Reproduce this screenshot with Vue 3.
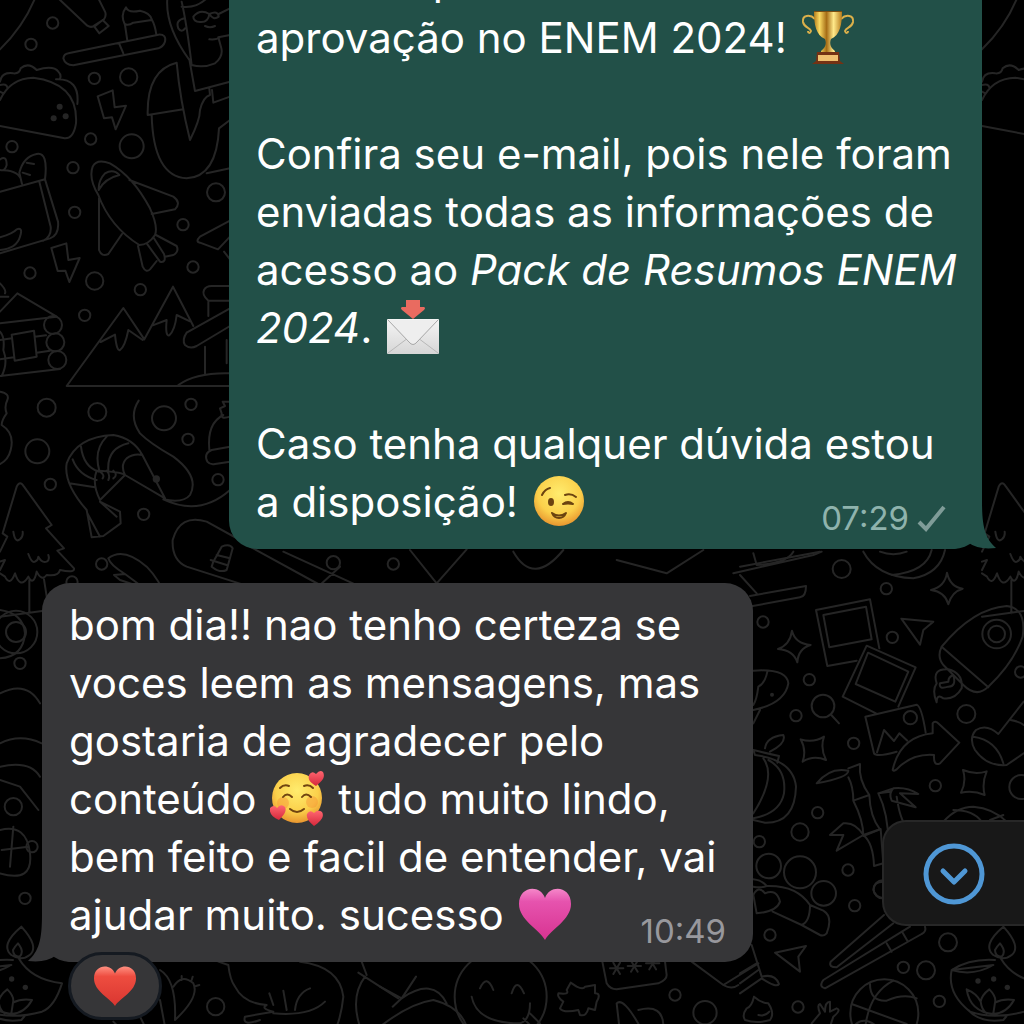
<script setup>
const dots = [
  [158, 69, 17], [93, 133, 17], [283, 235, 17], [386, 231, 26], [36, 440, 17], [272, 417, 17],
  [395, 439, 36], [219, 503, 17], [224, 637, 17], [648, 577, 27], [549, 674, 17], [579, 801, 17],
  [90, 819, 17], [284, 843, 26], [421, 869, 17], [254, 946, 17], [140, 1223, 27], [292, 1236, 27],
  [492, 1255, 36], [573, 1213, 17], [564, 1318, 17], [112, 1354, 36], [151, 1453, 17], [654, 1439, 17],
  [431, 1543, 17], [216, 1746, 17], [305, 1692, 17], [1000, 1688, 20], [1180, 1692, 17],
  [2525, 1707, 27], [2659, 1766, 17], [2289, 1866, 17], [2677, 1912, 17], [2428, 2039, 17],
  [2388, 2147, 17], [2561, 2230, 17], [2899, 2142, 27], [2806, 2357, 17], [2453, 2438, 17],
  [3064, 2361, 36], [3062, 2016, 17], [2400, 2496, 26], [2278, 2525, 17], [2544, 2610, 17],
  [2564, 2717, 17], [2310, 2805, 17], [2844, 2827, 27], [2710, 2902, 17], [2778, 2911, 27],
  [2394, 3021, 17], [2818, 3004, 17], [2648, 2668, 27], [75, 2695, 17], [647, 3020, 26],
  [2025, 2985, 17], [2115, 3038, 35], [60, 1990, 17], [40, 2420, 26], [96, 2540, 17],
]
</script>

<template>
  <main class="chat">
    <svg class="wallpaper" viewBox="0 0 3072 3072" preserveAspectRatio="xMidYMin slice" aria-hidden="true">
      <circle v-for="(d, i) in dots" :key="i" :cx="d[0]" :cy="d[1]" :r="d[2]" />
      <!-- toothbrush, taco, lightning, bread bag, plane -->
      <g id="edge">
        <path d="M105-5Q70 80 0 148M175-5L262 77Q275 85 285 75L312 58Q320 45 315 35L295-5M283 80L308 60 326 78 298 100Z" />
        <path d="M0 245Q5 215 40 220Q58 222 62 205Q85 185 110 210Q160 195 175 215Q185 225 180 236M0 300Q30 235 100 233Q235 250 228 370Q220 420 190 414L0 378M168 238Q240 235 232 312M0 255Q20 250 22 262M0 275 10 280" />
        <circle class="fill" cx="179" cy="320" r="9" /><circle class="fill" cx="161" cy="355" r="9" /><circle class="fill" cx="197" cy="349" r="9" />
      </g>
      <path d="M205 160 475 104Q500 102 495 125Q490 140 475 145L220 196Q195 195 190 175Q192 162 205 160ZM358 132 370 160M382 122L375 75Q360 45 378 22Q385 40 420 32Q450 38 455 58Q465 75 469 104M374 72Q385 78 400 68L455 60" />
      <path d="M293 289 338 271 344 322 378 317 347 388 336 352 312 355ZM154 744 199 730 205 780 239 774 208 846 196 812 173 813Z" />
      <path d="M0 575 135 538Q145 455 110 462Q70 470 58 518L66 552M0 510Q50 510 62 535M80 488 102 492M68 518 90 525M0 478Q20 465 20 495Q15 515 0 510M118 545 152 680Q155 710 130 722M135 538L174 665Q178 705 150 715L0 760M0 712Q40 700 50 688Q70 680 60 710Q50 745 0 750" />
      <path d="M278 500Q290 475 330 490Q400 530 450 625Q475 680 465 705Q445 735 418 735Q330 680 295 585Q265 535 278 500ZM296 570Q295 540 315 520Q340 505 358 525Q315 535 296 570ZM388 540 520 590Q545 608 525 628L455 642M297 595V750Q305 772 325 762L366 702M414 738L428 800Q438 820 450 808L470 783M468 705 530 738Q538 755 520 765L495 770M440 730 480 785Q500 790 492 762L460 712" />
      <path d="M502-5Q495 80 568 180M545 5Q560 70 575 195Q610 205 645 190Q670 170 664 145L655 112 690 105M545 20Q590 25 620-5M580 50Q600 25 628 42Q625 68 600 66Q580 65 580 50ZM628 42Q655 30 656 50 640 62 628 42M656 42 690 25M555 55Q525 60 535 85Q545 100 555 85M615 78Q630 85 645 78M628 118Q650 120 660 112M530 188Q440 210 443 345L550 328M568 178 585 273 690 245M530 188Q540 300 570 420Q600 360 600 330Q610 290 630 285L628 265M636 270 640 308 690 290M455 345Q460 530 560 535Q650 530 657 385L690 360M620 520 690 505" />
      <path d="M690 662 600 710Q585 725 600 728L654 748 690 710M672 755 690 778" />
      <!-- cabin, mountains, house -->
      <path d="M0 970 170 950 52 880 0 935M0 890 25 890M0 850Q20 870 15 880M0 1128 180 1107M35 1004 102 992 110 1070 44 1082ZM0 1020 36 1015M0 1078 42 1072M104 1010 138 1006M110 1058 150 1052M0 995Q15 1010 10 1050Q25 1090 5 1128" />
      <circle cx="159" cy="975" r="27" /><circle cx="166" cy="1027" r="27" /><circle cx="172" cy="1080" r="27" />
      <path d="M700 1158H200L370 924 433 1018 519 860 580 978M302 1026 345 1004Q350 1055 360 1050Q375 1040 385 990L428 1020M458 976 500 960Q495 1010 508 1006Q525 990 530 945L570 964M625 948V902Q605 885 612 870Q618 858 635 858H700M625 902H700M615 1120V1040M560 998 690 925M560 998Q545 1020 555 1035Q570 1048 590 1038L690 978M535 1155Q590 1115 700 1120M680 1020V1090" />
      <!-- tree -->
      <path d="M0 1175Q30 1180 22 1200Q12 1220 20 1240Q5 1260 5 1275Q45 1300 32 1350Q25 1380 0 1392" />
      <g id="tree">
        <path d="M50 1460Q60 1440 72 1460L155 1575 138 1585 192 1645 172 1652 222 1705Q225 1720 180 1710Q175 1730 140 1725Q125 1745 110 1715Q100 1760 85 1730Q60 1770 45 1720Q30 1760 15 1730L0 1720M50 1460 8 1600 22 1610 0 1655M0 1685 15 1680 0 1710M40 1595Q45 1630 60 1618Q70 1610 68 1595M85 1662Q95 1690 105 1685Q115 1680 115 1670Q125 1690 140 1685Q150 1680 145 1665M88 1740V1840M132 1738 148 1840M0 1850 148 1830" />
      </g>
      <use href="#edge" x="2946" /><use href="#tree" x="2946" />
      <!-- prawn -->
      <path d="M260 1530Q190 1450 200 1390Q230 1310 340 1305Q400 1315 427 1365L495 1495 375 1425Q360 1395 380 1375Q400 1360 427 1365M375 1425Q365 1415 290 1412Q275 1450 300 1500ZM208 1450 285 1462M218 1378Q235 1425 290 1440M243 1340Q250 1400 296 1415M320 1310Q280 1350 298 1412M385 1330Q320 1345 325 1412M300 1415Q315 1425 308 1435M320 1412Q332 1425 325 1440M340 1412Q355 1425 340 1435M260 1530 275 1612 310 1608 362 1570 360 1535 300 1505M262 1540 300 1610M300 1505 350 1550M416 1202Q385 1250 420 1300Q450 1330 520 1370Q600 1430 570 1485Q550 1510 490 1498Q600 1550 690 1470" />
      <circle class="fill" cx="469" cy="1437" r="11" />
      <path d="M690 1340 635 1350Q610 1360 622 1385Q630 1395 645 1392L690 1385M628 1350Q620 1270 670 1245M690 1250Q660 1260 665 1240L660 1225 675 1218 668 1205 690 1205" />
      <path d="M720 1620 620 1565Q540 1540 518 1620Q515 1680 560 1700L780 1770M640 1685 665 1640Q690 1630 698 1645L680 1710Q660 1720 635 1700ZM650 1665 690 1675M632 1680 680 1695" />
      <path d="M325 1675Q370 1640 440 1700Q480 1740 500 1800M325 1675Q330 1695 375 1722L342 1725 360 1740 420 1760M375 1722 480 1800" />
      <path d="M0 1830Q70 1840 75 1900Q70 1970 0 1975" /><circle cx="48" cy="1896" r="64" /><circle cx="48" cy="1896" r="30" />
      <path d="M0 2080Q80 2040 120 2110M0 2230Q60 2200 125 2230M0 2300Q90 2280 120 2330M0 2490Q80 2470 90 2560T0 2620M40 2480 30 2600M5 2550 85 2540M0 2340 60 2360 115 2430" />
      <path d="M750 1640 960 1755 1020 1700M850 1655 1080 1760M1230 1650 1310 1750 1400 1648M1540 1655Q1600 1760 1690 1650M1850 1680 2000 1720 2110 1650M2200 1720 2440 1665 2465 1655M2260 1660 2270 1695M2380 1655Q2360 1690 2270 1695" />
      <!-- photos and rocket -->
      <g transform="translate(2220 1620)">
        <path d="M0 80 240 35M0 105 50 160M30 168 198 138Q198 170 180 172L0 205M370 35Q410 110 520 115Q600 100 615 30M420 35Q460 50 500 35M455 105Q560 95 575 30" />
        <path d="M621 98Q630 140 668 146Q635 155 625 193Q615 155 573 150Q615 140 621 98ZM156 272Q165 310 212 315Q175 325 172 367Q160 330 114 327Q150 315 156 272ZM182 598Q220 610 252 590Q240 625 258 660Q220 645 188 665Q200 630 182 598ZM669 690Q705 705 740 694Q725 730 734 765Q700 750 663 758Q680 725 669 690Z" />
        <path d="M228 210 390 178 418 325M228 210 262 378 350 362M250 225 378 200 395 298 268 322ZM380 317 527 382 475 500M380 317 308 470 408 520M384 338 505 395 466 485 347 432ZM376 530 530 494Q545 500 557 578M376 530 402 640Q410 652 470 635M411 637 432 570 462 603 478 580 502 602M484 236 580 245 550 270 540 314Z" />
        <circle cx="511" cy="533" r="20" /><path d="M458 690Q480 590 578 580V550Q585 540 597 552L658 608 600 670Q580 680 582 645Q515 640 470 688Q460 695 458 690Z" />
        <path d="M605 320Q700 205 800 198Q860 205 848 290Q820 370 745 440Q710 475 670 435L610 375Q590 350 605 320L745 442M625 388Q575 385 590 430Q575 450 590 487Q590 460 610 475Q645 480 665 445Q670 400 625 388M600 430Q595 450 625 440Q650 440 640 405Q625 410 625 425Z" />
        <circle cx="770" cy="282" r="43" /><circle cx="770" cy="282" r="25" />
        <path d="M851 485 775 582Q740 550 708 570Q685 595 705 630Q740 680 800 675L851 640M700 590Q770 600 790 670M812 540Q840 545 851 555" />
        <circle cx="249" cy="498" r="34" /><path d="M274 525 297 550M40 392Q140 385 145 430Q135 490 40 510M82 395Q75 430 55 440Q50 480 40 495M40 550 60 510" /><circle class="fill" cx="96" cy="464" r="6" />
        <path d="M40 630Q80 640 117 648L112 668M40 630 45 645M75 625Q80 590 130 585Q140 610 90 635M45 645Q160 660 168 740Q165 850 75 848L40 840M85 660Q140 690 132 760Q120 820 40 835M70 655Q110 710 40 820" />
        <path d="M230 730Q270 680 325 692 325 712 230 730ZM325 685 360 672Q355 720 388 765L340 782Q340 740 325 712M388 765Q390 830 420 868L370 888Q370 840 340 782M450 755 415 760Q445 820 445 910M470 770Q480 840 500 860M415 760 460 745Q500 740 535 762L480 760 527 802 455 782Q445 760 460 745" />
        <path d="M270 885 310 850Q345 845 370 885L290 932 310 885ZM370 885 422 867 430 970 402 978Q400 910 370 885M610 845Q650 800 700 800Q760 805 800 845M640 810Q700 810 725 845M750 840 790 825" />
      </g>
      <!-- paw, chopsticks, ball -->
      <g transform="translate(2220 2340)">
        <circle cx="86" cy="258" r="37" /><circle cx="180" cy="277" r="48" /><circle cx="251" cy="340" r="37" /><path d="M430 305Q400 305 400 330Q405 350 430 355" />
        <path d="M40 298Q65 300 80 318Q170 315 210 375Q210 425 185 435L98 395M80 318Q60 325 40 320M50 400 40 345Q55 315 75 340Q110 325 120 365Q110 395 50 400ZM210 375 250 392Q280 410 260 460Q250 470 240 465L185 435" />
        <path d="M432 405 272 545Q265 562 290 562L460 430M555 440Q560 455 545 462L255 625Q235 620 250 600L510 440M440 490 455 515M488 458 502 482M105 518 198 498 175 530 180 575Z" />
        <path d="M35 495 65 590Q105 580 117 612Q110 625 65 595L0 640M0 580 50 550M0 610 55 570M42 650Q35 680 20 685Q5 705 15 720Q50 732 90 720Q105 700 85 670Q65 670 42 650M55 705Q75 710 88 695" />
        <circle cx="433" cy="700" r="102" /><path d="M390 612Q390 665 440 662Q490 640 530 655M460 602Q385 640 375 750M335 672 500 732M345 735Q370 710 405 735M215 730 240 700Q230 675 240 672L255 695Q255 665 270 665V695L290 685Q305 690 280 710L270 740" />
      </g>
      <!-- oil lamp -->
      <g id="lamp" transform="translate(2220 2340)">
        <path d="M790 440Q845 500 815 525Q790 545 760 525Q725 495 790 440ZM780 490Q800 515 785 530 765 530 765 510 770 500 780 490ZM765 540Q690 535 635 570Q620 640 690 695Q760 720 852 695Q890 680 912 610Q820 600 782 535M635 570Q700 590 760 555ZM680 628Q710 640 722 665Q725 645 748 628Q770 650 765 668 790 655 822 660 800 700 760 702 690 695 680 628ZM722 665Q725 690 740 700M765 668 760 700M685 690Q720 730 790 720L800 708" />
        <circle class="fill" cx="714" cy="603" r="8" /><circle class="fill" cx="761" cy="597" r="8" /><circle class="fill" cx="802" cy="622" r="8" />
      </g>
      <use href="#lamp" x="-2946" />
      <!-- cactus, lizard, smiley, password -->
      <g transform="translate(0 2640)">
        <path d="M480 270Q530 300 525 420M480 360 495 440M520 320Q545 280 580 310Q600 350 525 420M545 300V288M575 300 578 290M588 318 598 315M340 425 355 440M420 410 435 440M655 245 685 255Q690 300 705 320Q730 370 800 375Q780 385 820 395L735 410Q725 440 780 420M900 245Q1020 260 1030 350Q1025 400 1010 440M820 400Q930 410 975 365M808 340 820 375M850 332 860 390M885 390Q890 340 930 325M1085 245 1100 285M1075 278 1195 355M1095 290Q1050 350 1080 440" />
        <path d="M1140 320 1205 355 1248 290M1205 355 1178 380M1205 355Q1300 290 1340 370M1140 440Q1230 370 1300 360Q1380 380 1400 440" />
        <circle cx="1502" cy="350" r="138" /><path d="M1440 325Q1460 280 1480 330M1535 340Q1550 290 1572 340M1415 350Q1430 430 1560 430Q1590 420 1590 370M1570 415 1590 435M1590 400 1620 430" />
        <path d="M1712 308 1730 320Q1750 330 1755 320L1785 315 1785 340Q1805 340 1790 365L1785 390 1765 385Q1760 410 1740 405L1735 390Q1690 400 1680 385L1690 365Q1670 350 1675 340Q1710 345 1700 330Z" />
        <path d="M1807 245 1820 310Q1830 328 1850 328L1975 310Q2000 300 2000 285L1995 245M1830 265H1870M1840 248 1860 282M1860 248 1840 282M1883 258H1923M1893 242 1913 275M1913 242 1893 275M1938 250H1978M1948 235 1968 268M1968 235 1948 268M1858 440 1850 370Q1870 350 1920 440M1915 390Q1990 370 1990 440M2075 245 2170 315Q2195 330 2215 315M2170 315 2275 250" />
      </g>
    </svg>

    <article class="bubble outgoing">
      <div class="text">
        sucesso para a sua<br>
        aprovação no ENEM 2024!
        <svg class="emoji" viewBox="0 0 54 56" role="img" aria-label="troféu">
          <defs>
            <linearGradient id="gold"><stop stop-color="#b47d1c" /><stop offset=".2" stop-color="#f8d962" /><stop offset=".45" stop-color="#a66d16" /><stop offset=".7" stop-color="#ffe98a" /><stop offset="1" stop-color="#b67b1c" /></linearGradient>
          </defs>
          <path d="M14 10C9 5 1 6 2 13c1 6 7 5 8 9-1 3-3 2-3 0M40 10c5-5 13-4 12 3-1 6-7 5-8 9 1 3 3 2 3 0" fill="none" stroke="#dcb04a" stroke-width="2" />
          <path d="M13 2h28c0 14-2 24-11 28-2 5 0 9 4 12v3H20v-3c4-3 6-7 4-12C15 26 13 16 13 2Z" fill="url(#gold)" />
          <path d="M13 2h28v1H13z" fill="#7b4f12" /><path d="M16 43h22l1 9 4 3H11l4-3Z" fill="#743214" /><path d="M17 46h20v6H17z" fill="#f0c070" />
        </svg><br>
        <br>
        Confira seu e-mail, pois nele foram<br>
        enviadas todas as informações de<br>
        acesso ao <em>Pack de Resumos ENEM</em><br>
        <em>2024</em>.
        <svg class="emoji" viewBox="0 0 54 56" role="img" aria-label="envelope">
          <defs>
            <linearGradient id="paper" x2="0" y2="1"><stop stop-color="#f5f5f5" /><stop offset="1" stop-color="#d6d6d6" /></linearGradient>
          </defs>
          <rect x="1" y="20" width="52" height="35" rx="1" fill="url(#paper)" />
          <path d="M2 54 22 39M52 54 32 39" stroke="#b8b8b8" stroke-width="1" />
          <path d="M2 21 23 43q4 5 8 0L52 21" fill="#eee" stroke="#a7a7a7" stroke-width="1" />
          <path d="M20 1h14v7h4q2 1 0 3L27 20 16 11q-2-2 0-3h4Z" fill="#e96b60" />
        </svg><br>
        <br>
        Caso tenha qualquer dúvida estou
      </div>
      <div class="last">
        <span class="text">a disposição!
          <svg class="emoji" viewBox="0 0 54 56" role="img" aria-label="piscadela">
            <defs>
              <radialGradient id="face" cy=".35" r=".65"><stop stop-color="#ffec6e" /><stop offset=".65" stop-color="#fbd04b" /><stop offset="1" stop-color="#e8962f" /></radialGradient>
            </defs>
            <circle cx="27" cy="28" r="25" fill="url(#face)" />
            <ellipse cx="19" cy="29" rx="3" ry="4" fill="#6b4310" />
            <path d="M10 22q3-6 8-7M33 22q6-2 11 2M31 31q5-4 10 0-5-1-10 0ZM20 40q7 5 14 0-2 5-7 5t-7-5Z" fill="none" stroke="#6b4310" stroke-width="2" stroke-linecap="round" stroke-linejoin="round" />
          </svg>
        </span>
        <span class="meta"><time>07:29</time>
          <svg class="check" viewBox="0 0 30 28" role="img" aria-label="enviada"><path d="M2 18 9 25 27 3" /></svg>
        </span>
      </div>
      <svg class="tail" viewBox="0 0 46 48" aria-hidden="true"><path d="M32 0C32 26 35 37 46 47Q28 49 19 42Q10 48 0 48V0Z" /></svg>
    </article>

    <article class="bubble incoming">
      <div class="text">
        bom dia!! nao tenho certeza se<br>
        voces leem as mensagens, mas<br>
        gostaria de agradecer pelo<br>
        conteúdo
        <svg class="emoji" viewBox="0 0 54 56" role="img" aria-label="rosto com corações">
          <defs>
            <linearGradient id="red" x2="0" y2="1"><stop stop-color="#ff6670" /><stop offset="1" stop-color="#d5283b" /></linearGradient>
          </defs>
          <circle cx="27" cy="28" r="25" fill="url(#face)" />
          <circle cx="13" cy="33" r="6" fill="#f58a35" opacity=".4" /><circle cx="42" cy="32" r="6" fill="#f58a35" opacity=".4" />
          <path d="M10 18q4-4 9-2M34 16q5-2 9 2M13 27q4-5 9 0M32 27q4-5 9 0M20 39q7 6 14 0" fill="none" stroke="#704411" stroke-width="2" stroke-linecap="round" />
          <g fill="url(#red)">
            <path d="M46 16C39 12 38 9 39 5q3-5 7-1 4-5 7-2c3 6-2 10-7 14Z" />
            <path d="M9 50C2 47-1 43 0 38q4-4 7 0 4-5 8-1c2 4-1 8-6 13Z" />
            <path d="M44 56c-5-4-8-8-7-12q3-5 7-1 4-4 8-1c3 5-2 10-8 14Z" />
          </g>
        </svg>
        tudo muito lindo,<br>
        bem feito e facil de entender, vai
      </div>
      <div class="last">
        <span class="text">ajudar muito. sucesso
          <svg class="emoji" viewBox="0 0 54 56" role="img" aria-label="coração rosa">
            <defs>
              <linearGradient id="pink" x2="0" y2="1"><stop stop-color="#f587c9" /><stop offset=".25" stop-color="#e653ae" /><stop offset="1" stop-color="#d83391" /></linearGradient>
            </defs>
            <path d="M27 54C21 43 1 34 1 18 1 0 22-2 27 12 32-2 53 0 53 18 53 34 33 43 27 54Z" fill="url(#pink)" />
          </svg>
        </span>
        <span class="meta"><time>10:49</time></span>
      </div>
      <svg class="tail" viewBox="0 0 46 48" aria-hidden="true"><path d="M14 0C14 26 11 37 0 47Q18 49 27 42Q36 48 46 48V0Z" /></svg>
      <button class="reaction" type="button" aria-label="Reação: coração">
        <svg viewBox="0 0 44 42" aria-hidden="true">
          <defs>
            <linearGradient id="love" x2="0" y2="1"><stop stop-color="#ff8f80" /><stop offset=".25" stop-color="#ee4d40" /><stop offset="1" stop-color="#d93630" /></linearGradient>
          </defs>
          <path d="M22 42C17 34 0 27 0 13 0-2 18-3 22 8 26-3 44-2 44 13 44 27 27 34 22 42Z" fill="url(#love)" />
        </svg>
      </button>
    </article>

    <button class="jump" type="button" aria-label="Ir para o fim">
      <svg viewBox="0 0 62 62" aria-hidden="true"><circle cx="31" cy="31" r="28" /><path d="M20 28 31 39 42 28" /></svg>
    </button>
  </main>
</template>

<style>
body {
  margin: 0;
  background: #000;
}
</style>

<style scoped>
.chat {
  position: relative;
  box-sizing: border-box;
  height: 100vh;
  padding: 0 42px 62px;
  overflow: hidden;
  display: flex;
  flex-direction: column;
  justify-content: flex-end;
  gap: 34px;
  background: #000;
  font-family: Inter, "Liberation Sans", sans-serif;
}
.wallpaper {
  position: absolute;
  inset: 0;
  width: 100%;
  height: 100%;
  fill: none;
  stroke: #252525;
  stroke-width: 6;
  stroke-linecap: round;
  stroke-linejoin: round;
}
.wallpaper .fill {
  fill: #252525;
  stroke: none;
}
.bubble {
  position: relative;
  isolation: isolate;
  box-sizing: border-box;
  flex: none;
  max-width: 100%;
  padding: 13px 27px 18px;
  border-radius: 28px;
  color: #fff;
  font-size: 42px;
  line-height: 58px;
}
.outgoing {
  align-self: flex-end;
  width: 753px;
  background: #225048;
}
.incoming {
  align-self: flex-start;
  width: 711px;
  background: #363638;
}
.text {
  white-space: nowrap;
}
.last {
  display: flex;
  justify-content: space-between;
  align-items: flex-end;
}
.emoji {
  width: 54px;
  height: 56px;
  margin: -8px 2px;
  vertical-align: -4px;
}
.meta {
  display: flex;
  align-items: center;
  gap: 8px;
  margin-bottom: -3px;
  font-size: 33px;
  line-height: 32px;
  color: #98989d;
}
.outgoing .meta {
  margin-right: 8px;
  color: #8fb3ad;
}
.check {
  width: 30px;
  height: 28px;
  fill: none;
  stroke: #7f9c98;
  stroke-width: 4;
}
.tail {
  position: absolute;
  z-index: -1;
  bottom: 0;
  width: 46px;
  height: 48px;
}
.outgoing .tail {
  right: -14px;
  fill: #225048;
}
.incoming .tail {
  left: -14px;
  fill: #363638;
}
.reaction {
  position: absolute;
  left: 26px;
  bottom: -58px;
  display: grid;
  place-items: center;
  width: 94px;
  height: 68px;
  padding: 0;
  border: 3px solid #151a21;
  border-radius: 34px;
  background: #363638;
}
.reaction svg {
  width: 42px;
  height: 42px;
}
.jump {
  position: absolute;
  right: 0;
  bottom: 98px;
  width: 142px;
  height: 106px;
  padding: 2px 0 0;
  border: 2px solid #272727;
  border-right: 0;
  border-radius: 24px 0 0 24px;
  background: #181818;
}
.jump svg {
  display: block;
  width: 62px;
  height: 62px;
  margin: 0 auto;
  fill: none;
  stroke: #4f97d5;
  stroke-width: 5;
  stroke-linecap: round;
  stroke-linejoin: round;
}
</style>
